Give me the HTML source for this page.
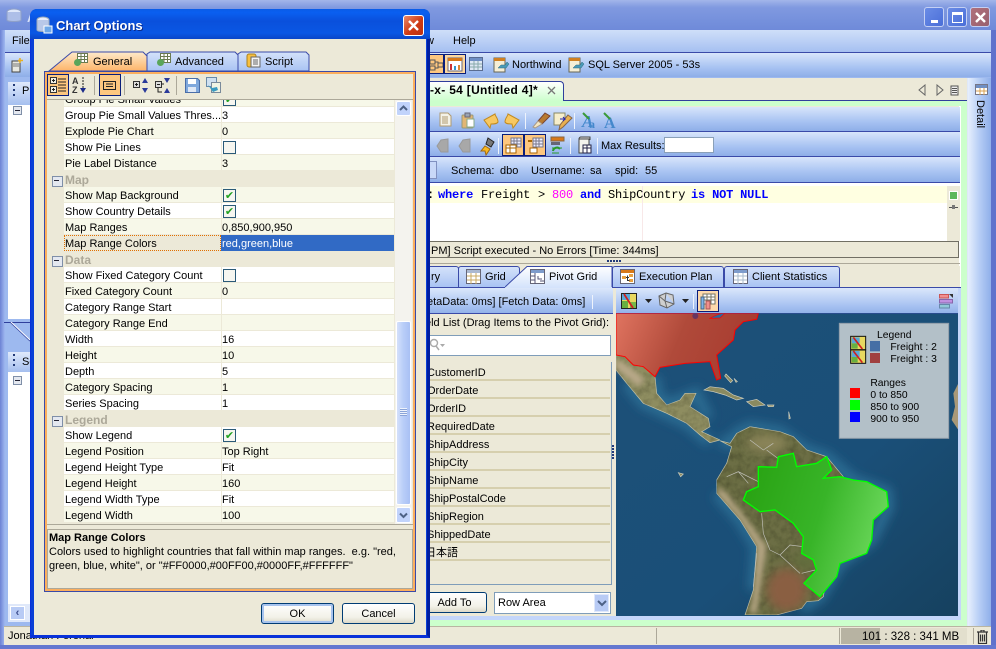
<!DOCTYPE html>
<html><head><meta charset="utf-8"><style>
html,body{margin:0;padding:0;width:996px;height:649px;overflow:hidden;background:#ece9d8}
body{position:relative;font:11px/14px "Liberation Sans","Noto Sans CJK JP",sans-serif;color:#000}
div,span,svg{position:absolute;box-sizing:border-box}
.t{white-space:nowrap;height:14px;margin-top:1px}
.tb{background:linear-gradient(#d8e5fb,#a8c3f2 60%,#8eaee8);border-bottom:1px solid #3a4aa8}
.r{left:64px;width:330px;height:16px;background:#fff;border-bottom:1px solid #ece9d8}
.c{background:#f7f8e9}
.n{top:2px;left:1px;white-space:nowrap}
.v{left:158px;top:2px;white-space:nowrap}
.d{left:157px;top:0;width:1px;height:16px;background:#ece9d8}
.g{left:48px;width:346px;height:16px;background:#ece9d8;color:#aca899;font-weight:bold;font-size:12px}
.g b{position:absolute;left:17px;top:2px}
.g i{position:absolute;left:4px;top:5px;width:9px;height:9px;border:1px solid #7f8fa8;background:#e4e8f0}
.g i:after{content:"";position:absolute;left:1px;top:3px;width:5px;height:1px;background:#223}
.ck{left:159px;top:2px;width:13px;height:13px;border:1px solid #2a5a78;background:#f6f6f0;color:#21a121;font:bold 11px/11px "DejaVu Sans",sans-serif;text-align:center}
.f{left:416px;width:194px;height:18px;background:#ece9d8;border-bottom:2px solid #d6cfae;padding-left:11px;line-height:21px;white-space:nowrap}
.sep{width:1px;background:#8ea6d8;border-right:1px solid #eef3fc}
.on{background:#fdc77f;border:1px solid #0a1e7a}
.btn{background:linear-gradient(#fff,#f2f1e8 70%,#dcd9c8);border:1px solid #003c74;border-radius:3px;text-align:center;line-height:21px}
.tab{background:linear-gradient(#d4e2fa,#a9c3f3);border:1px solid #3a4aa8;border-bottom:0;border-radius:3px 3px 0 0}
</style></head><body>

<!-- main window frame -->
<div style="left:0;top:0;width:996px;height:649px;background:#7c95dd"></div>
<div style="left:0;top:0;width:996px;height:30px;background:linear-gradient(#a3b6ea,#8099e0 25%,#7590dc 70%,#6f8ad9)"></div>
<div style="left:4px;top:30px;width:987px;height:22px;background:linear-gradient(#cfdff9,#a6c0f1)"></div>
<div class="tb" style="left:4px;top:52px;width:987px;height:26px;border-top:1px solid #3a4aa8"></div>
<div style="left:4px;top:77px;width:987px;height:550px;background:#9db9ef"></div>
<div style="left:991px;top:30px;width:5px;height:619px;background:#5f72cc"></div>
<div style="left:0;top:30px;width:5px;height:615px;background:linear-gradient(90deg,#6c82d4,#9fb8f0)"></div>
<svg style="left:6px;top:8px" width="18" height="16"><ellipse cx="8" cy="4" rx="7" ry="3" fill="#dfe8fa" stroke="#8fa0c8"/><path d="M1 4v8c0 2 14 2 14 0V4" fill="#aebfe8" stroke="#8fa0c8"/></svg>
<div class="t" style="left:27px;top:10px;color:#d6e0f8;font-weight:bold;font-size:13px">A</div>
<div class="t" style="left:12px;top:33px">File</div>
<div class="t" style="left:426px;top:33px">w</div>
<div class="t" style="left:453px;top:33px">Help</div>
<svg style="left:11px;top:57px" width="14" height="16"><rect x="1" y="4" width="8" height="11" fill="#e8e8e0" stroke="#444"/><path d="M2 7h6M2 9h6" stroke="#777"/><path d="M9 1v5M7 3.500h5" stroke="#e8b020" stroke-width="1.500"/></svg>

<!-- top toolbar right -->
<div class="on" style="left:427px;top:54px;width:17px;height:20px"></div>
<svg style="left:430px;top:58px" width="13" height="13"><path d="M0 2h5v4H0zM0 8h5v4H0zM8 5h5v4H8zM5 4h3v6H5" fill="none" stroke="#555"/></svg>
<div class="on" style="left:444px;top:54px;width:22px;height:20px;background:#fdd8a0"></div>
<svg style="left:447px;top:57px" width="16" height="15"><rect x="1" y="1" width="14" height="13" fill="#fff" stroke="#667"/><rect x="1" y="1" width="14" height="3" fill="#d87818"/><rect x="3" y="7" width="2" height="6" fill="#c33"/><rect x="7" y="9" width="2" height="4" fill="#39c"/><rect x="11" y="8" width="2" height="5" fill="#d83"/></svg>
<svg style="left:469px;top:57px" width="15" height="15"><rect x=".5" y=".5" width="13" height="13" fill="#dfe8f5" stroke="#5a6c90"/><rect x="1" y="1" width="12" height="3" fill="#6f8fc4"/><path d="M1 7h12M1 10h12M5 4v9M9 4v9" stroke="#8aa"/></svg>
<svg style="left:493px;top:56px" width="18" height="18"><rect x="1" y="2" width="11" height="14" fill="#f6efd6" stroke="#665"/><rect x="1" y="2" width="11" height="3" fill="#d08020"/><path d="M5 12l3-3 4 0 2-3 2 2-3 4-4 0z" fill="#4a9ab8" stroke="#2a6a80" stroke-width=".5"/></svg>
<div class="t" style="left:512px;top:57px">Northwind</div>
<svg style="left:568px;top:56px" width="18" height="18"><rect x="1" y="2" width="11" height="14" fill="#f6efd6" stroke="#665"/><rect x="1" y="2" width="11" height="3" fill="#d08020"/><path d="M5 12l3-3 4 0 2-3 2 2-3 4-4 0z" fill="#4a9ab8" stroke="#2a6a80" stroke-width=".5"/></svg>
<div class="t" style="left:588px;top:57px">SQL Server 2005 - 53s</div>

<!-- window controls -->
<div style="left:924px;top:7px;width:20px;height:20px;border:1px solid #c4d0f4;border-radius:3px;background:linear-gradient(135deg,#6a8ce6,#4a6ed8)"><span style="left:6px;top:12px;width:7px;height:3px;background:#fff"></span></div>
<div style="left:947px;top:7px;width:20px;height:20px;border:1px solid #c4d0f4;border-radius:3px;background:linear-gradient(135deg,#6a8ce6,#4a6ed8)"><span style="left:4px;top:4px;width:11px;height:11px;border:1px solid #fff;border-top-width:3px"></span></div>
<div style="left:970px;top:7px;width:20px;height:20px;border:1px solid #c4d0f4;border-radius:3px;background:linear-gradient(135deg,#b0707c,#98606e)"><svg style="left:3px;top:3px" width="13" height="13"><path d="M2 2l9 9M11 2l-9 9" stroke="#fff" stroke-width="2.400"/></svg></div>

<!-- left panes -->
<div style="left:8px;top:82px;width:30px;height:23px;background:linear-gradient(#dfe9fb,#a5bfef)"></div>
<div class="t" style="left:22px;top:83px">Pr</div>
<div style="left:13px;top:84px;width:2px;height:12px;background:repeating-linear-gradient(#223a78 0 2px,transparent 2px 5px)"></div>
<div style="left:8px;top:105px;width:30px;height:214px;background:#fff"></div>
<div style="left:13px;top:106px;width:9px;height:9px;border:1px solid #7f8fa8;background:#e4e8f0"><span style="left:1px;top:3px;width:5px;height:1px;background:#223"></span></div>
<div style="left:4px;top:322px;width:30px;height:1px;background:#2f3f9c"></div>
<svg style="left:8px;top:322px" width="24" height="20"><path d="M2 0L22 19" stroke="#2f3f9c"/><path d="M3 0L22 18" stroke="#fff"/></svg>
<div style="left:8px;top:352px;width:30px;height:20px;background:linear-gradient(#dfe9fb,#a5bfef)"></div>
<div class="t" style="left:22px;top:354px">So</div>
<div style="left:13px;top:354px;width:2px;height:12px;background:repeating-linear-gradient(#223a78 0 2px,transparent 2px 5px)"></div>
<div style="left:8px;top:372px;width:30px;height:232px;background:#fff"></div>
<div style="left:13px;top:376px;width:9px;height:9px;border:1px solid #7f8fa8;background:#e4e8f0"><span style="left:1px;top:3px;width:5px;height:1px;background:#223"></span></div>
<div style="left:8px;top:604px;width:30px;height:18px;background:#dfe8fa"></div>
<div style="left:10px;top:606px;width:15px;height:14px;background:#b8cbf5;border:1px solid #fff;color:#3b4c8c;font-weight:bold;text-align:center;line-height:12px">&#8249;</div>

<!-- status bar -->
<div style="left:4px;top:626px;width:987px;height:19px;background:#ece9d8;border-top:1px solid #b9b5a2"></div>
<div style="left:0;top:645px;width:996px;height:4px;background:#6478d0"></div>
<div class="t" style="left:8px;top:628px">Jonathan Ferenal</div>
<div style="left:656px;top:628px;width:1px;height:16px;background:#aca899"></div>
<div style="left:839px;top:628px;width:1px;height:16px;background:#aca899"></div>
<div style="left:841px;top:628px;width:39px;height:16px;background:#b7b3a2"></div>
<div style="left:880px;top:628px;width:87px;height:16px;background:#e2dfcd"></div>
<div style="left:973px;top:628px;width:1px;height:16px;background:#aca899"></div>
<div class="t" style="left:862px;top:629px;font-size:11.500px">101 : 328 : 341 MB</div>
<svg style="left:977px;top:630px" width="12" height="14"><path d="M0 2h11M4 2V0h3v2M1.500 2.500v11h8v-11M3.500 4.500v7M5.500 4.500v7M7.500 4.500v7" fill="none" stroke="#333" stroke-width="1.200"/></svg>

<!-- detail strip -->
<div style="left:967px;top:78px;width:24px;height:548px;background:linear-gradient(90deg,#e6effd,#b6cdf5 50%,#8fafea);border-left:1px solid #dfe8f8"></div>
<svg style="left:975px;top:84px" width="14" height="11"><rect x=".5" y=".5" width="12" height="10" fill="#fff" stroke="#778"/><rect x="1" y="1" width="11" height="3" fill="#6f8fc4"/><path d="M1 7h11M5 4v7M9 4v7" stroke="#d8a050"/></svg>
<div style="left:987px;top:100px;white-space:nowrap;transform-origin:0 0;transform:rotate(90deg)">Detail</div>

<!-- document tab row -->
<div style="left:430px;top:78px;width:537px;height:23px;background:#ece9d8"></div>
<div style="left:430px;top:100px;width:537px;height:1px;background:#2f3f9c"></div>
<div style="left:425px;top:81px;width:139px;height:20px;background:linear-gradient(#fff,#ccffcc);border:1px solid #2f3f9c;border-bottom:0;border-radius:0 4px 0 0"></div>
<div class="t" style="left:430px;top:82px;font-weight:bold;font-size:12px;letter-spacing:.3px">-x- 54 [Untitled 4]*</div>
<svg style="left:546px;top:85px" width="12" height="12"><path d="M2 2l7 7M9 2l-7 7" stroke="#777" stroke-width="1.300"/></svg>
<svg style="left:918px;top:84px" width="10" height="13"><path d="M7 1v10L1 6z" fill="none" stroke="#666"/></svg>
<svg style="left:935px;top:84px" width="10" height="13"><path d="M2 1v10l6-5z" fill="none" stroke="#666"/></svg>
<svg style="left:949px;top:84px" width="11" height="13"><rect x="2" y="2" width="7" height="9" fill="#eee" stroke="#555"/><path d="M3 4.500h5M3 6.500h5M3 8.500h5" stroke="#555"/></svg>
<div style="left:430px;top:101px;width:537px;height:525px;background:#ccffcc"></div>

<!-- editor panel -->
<div style="left:430px;top:106px;width:531px;height:510px;background:#ece9d8;border-right:2px solid #fff"></div>
<div class="tb" style="left:430px;top:107px;width:530px;height:25px"></div>
<div class="tb" style="left:430px;top:132px;width:530px;height:25px"></div>
<div class="tb" style="left:430px;top:157px;width:530px;height:26px"></div>
<div style="left:430px;top:183px;width:530px;height:3px;background:#fff"></div>

<!-- toolbar 1 icons -->
<svg style="left:439px;top:112px" width="14" height="16"><path d="M1 1h8l3 3v10H1z" fill="#f4f2e8" stroke="#b09a70"/><path d="M3 5h6M3 7h6M3 9h6M3 11h6" stroke="#b09a70"/></svg>
<svg style="left:461px;top:112px" width="15" height="17"><rect x="1" y="3" width="11" height="13" rx="1" fill="#e2b674" stroke="#997"/><rect x="4" y="1" width="5" height="4" fill="#9aa4b4" stroke="#667"/><rect x="6" y="7" width="7" height="8" fill="#fff" stroke="#8a8"/></svg>
<svg style="left:482px;top:113px" width="18" height="16"><path d="M13 1L2 7l6 8 1-4c3 0 6 0 7-2 0-4-3-6-3-8z" fill="#f8c860" stroke="#c08a20"/></svg>
<svg style="left:503px;top:113px" width="18" height="16"><path d="M5 1l11 6-6 8-1-4c-3 0-6 0-7-2 0-4 3-6 3-8z" fill="#f8c860" stroke="#c08a20"/></svg>
<div class="sep" style="left:525px;top:113px;height:16px"></div>
<svg style="left:531px;top:112px" width="20" height="18"><path d="M14 1l5 3-8 8-4-3z" fill="#b87a30" stroke="#743"/><path d="M7 9l4 3-7 4-2-1z" fill="#f4e6c0" stroke="#a98"/></svg>
<svg style="left:553px;top:112px" width="20" height="20"><path d="M1 1h11v6l-4 6H1z" fill="#f6eecb" stroke="#886"/><path d="M15 3l4 3-9 9-4 3 1-5z" fill="#e8b050" stroke="#864"/><path d="M7 7h5l-2-2m2 2l-2 2" fill="none" stroke="#22a"/></svg>
<div class="sep" style="left:574px;top:113px;height:16px"></div>
<svg style="left:581px;top:110px" width="40" height="20"><text x="1" y="17" font-size="17" font-family="Liberation Serif" font-style="italic" fill="#4488cc" font-weight="bold">A</text><text x="8" y="18" font-size="12" font-family="Liberation Serif" fill="#4488cc" font-weight="bold">a</text><path d="M2 3l6 6" stroke="#3a9a3a" stroke-width="2"/><text x="23" y="18" font-size="16" font-family="Liberation Serif" fill="#4488cc" font-weight="bold">A</text><path d="M23 3l6 6" stroke="#3a9a3a" stroke-width="2"/></svg>

<!-- toolbar 2 icons -->
<svg style="left:434px;top:137px" width="16" height="18"><path d="M3 9l4-6 7-1v13l-7 0z" fill="#a8a8a8" stroke="#999"/></svg>
<svg style="left:456px;top:137px" width="16" height="18"><path d="M3 9l4-6 7-1v13l-7 0z" fill="#a8a8a8" stroke="#999"/></svg>
<svg style="left:479px;top:136px" width="18" height="20"><path d="M9 2l6 4-3 5-5-3z" fill="#777" stroke="#222"/><path d="M6 10l5 3-4 6-1-4-4 0z" fill="#f8b820" stroke="#a06810"/></svg>
<div class="sep" style="left:498px;top:138px;height:16px"></div>
<div class="on" style="left:502px;top:134px;width:22px;height:22px"></div>
<svg style="left:505px;top:137px" width="17" height="17"><rect x="6" y="1" width="10" height="9" fill="#eef" stroke="#778"/><path d="M6 4h10M6 7h10M9 1v9M12 1v9" stroke="#778"/><rect x="1" y="8" width="10" height="8" fill="#fff" stroke="#a60"/><path d="M1 11h10M5 8v8" stroke="#a60"/></svg>
<div class="on" style="left:524px;top:134px;width:22px;height:22px"></div>
<svg style="left:527px;top:137px" width="17" height="17"><rect x="6" y="1" width="10" height="9" fill="#eef" stroke="#778"/><path d="M6 4h10M6 7h10M9 1v9M12 1v9" stroke="#778"/><rect x="1" y="3" width="4" height="2" fill="#a60"/><rect x="3" y="11" width="7" height="5" fill="#fff" stroke="#a60"/></svg>
<svg style="left:549px;top:136px" width="18" height="20"><rect x="2" y="1" width="13" height="4" fill="#d87818" stroke="#864"/><rect x="2" y="6" width="9" height="3" fill="#667"/><path d="M4 15a4 4 0 0 1 7-2" fill="none" stroke="#2a9a2a" stroke-width="2"/><path d="M3 12h10M3 17h7" stroke="#2a9a2a"/></svg>
<div class="sep" style="left:570px;top:138px;height:16px"></div>
<svg style="left:576px;top:136px" width="17" height="19"><path d="M3 3a2 2 0 0 1 2-2h9v3" fill="#ddd" stroke="#444"/><rect x="3" y="3" width="10" height="14" fill="#f4f4ee" stroke="#444"/><rect x="7" y="9" width="8" height="8" fill="#fff" stroke="#224"/><path d="M7 12h8M11 9v8" stroke="#224"/></svg>
<div class="sep" style="left:597px;top:138px;height:16px"></div>
<div class="t" style="left:601px;top:138px">Max Results:</div>
<div style="left:664px;top:137px;width:50px;height:16px;background:#fff;border:1px solid #8aa0b8"></div>

<!-- toolbar 3 -->
<div style="left:430px;top:161px;width:7px;height:18px;background:#c8d8f8;border:1px solid #8090c0;border-left:0"></div>
<div class="t" style="left:451px;top:163px">Schema:</div><div class="t" style="left:500px;top:163px">dbo</div>
<div class="t" style="left:531px;top:163px">Username:</div><div class="t" style="left:590px;top:163px">sa</div>
<div class="t" style="left:615px;top:163px">spid:</div><div class="t" style="left:645px;top:163px">55</div>

<!-- editor -->
<div style="left:430px;top:186px;width:517px;height:55px;background:#fff"></div>
<div style="left:430px;top:186px;width:517px;height:17px;background:#ffffe1"></div>
<div style="left:642px;top:186px;width:1px;height:55px;background:#f8e8e8"></div>
<div style="left:947px;top:186px;width:13px;height:55px;background:#ece9d8"></div>
<div style="left:949px;top:191px;width:9px;height:9px;background:#5cb85c;border:1px solid #fff"></div>
<div style="left:949px;top:207px;width:9px;height:1px;background:#555"></div>
<div style="left:952px;top:205px;width:3px;height:4px;background:#777"></div>
<div style="left:430px;top:188px;width:517px;height:16px;font:12px/15px 'Liberation Mono',monospace;letter-spacing:-.18px;white-space:pre"><span style="left:-3px;top:0;font-weight:bold">:</span><span style="left:8px;top:0;color:#00f;font-weight:bold">where</span><span style="left:51px;top:0">Freight</span><span style="left:108px;top:0">&gt;</span><span style="left:122px;top:0;color:#f0f">800</span><span style="left:150px;top:0;color:#00f;font-weight:bold">and</span><span style="left:178px;top:0">ShipCountry</span><span style="left:261px;top:0;color:#00f;font-weight:bold">is NOT NULL</span></div>

<!-- exec status -->
<div style="left:430px;top:241px;width:529px;height:17px;border:1px solid #716f64;border-left:0"></div>
<div class="t" style="left:431px;top:243px">PM] Script executed - No Errors [Time: 344ms]</div>
<div style="left:430px;top:263px;width:530px;height:1px;background:#aca899"></div>
<div style="left:607px;top:260px;width:14px;height:2px;background:repeating-linear-gradient(90deg,#223a78 0 2px,transparent 2px 3px)"></div>

<!-- result tabs -->
<div style="left:430px;top:266px;width:530px;height:21px;background:#ece9d8"></div>
<div class="tab" style="left:425px;top:266px;width:34px;height:21px"></div>
<div class="t" style="left:431px;top:269px">ry</div>
<div class="tab" style="left:458px;top:266px;width:62px;height:21px"></div>
<svg style="left:466px;top:269px" width="15" height="15"><rect x=".5" y=".5" width="14" height="14" fill="#fff" stroke="#667"/><rect x="1" y="1" width="13" height="3" fill="#aab8d0"/><path d="M1 7h13M1 11h13M5 4v11M10 4v11" stroke="#c8a860"/></svg>
<div class="t" style="left:485px;top:269px">Grid</div>
<div style="left:505px;top:266px;width:107px;height:24px;background:linear-gradient(#fff,#cfe0fb);clip-path:polygon(0 21px,22px 0,100% 0,100% 100%,0 100%)"></div>
<svg style="left:505px;top:266px" width="108" height="24"><path d="M0 21L22 .5H107V21" fill="none" stroke="#3a4aa8"/></svg>
<svg style="left:530px;top:269px" width="15" height="15"><rect x=".5" y=".5" width="14" height="14" fill="#fff" stroke="#667"/><rect x="1" y="1" width="13" height="3" fill="#7e9ccc"/><path d="M5 4v11M1 7h4M1 11h4M8 7v3h4M10 12h4" stroke="#557" fill="none"/></svg>
<div class="t" style="left:549px;top:269px">Pivot Grid</div>
<div class="tab" style="left:612px;top:266px;width:112px;height:21px"></div>
<svg style="left:620px;top:269px" width="15" height="15"><rect x=".5" y=".5" width="14" height="14" fill="#fff" stroke="#667"/><rect x="1" y="1" width="13" height="3" fill="#d87818"/><rect x="2" y="7" width="4" height="3" fill="#e8a040"/><rect x="9" y="5" width="4" height="3" fill="#e8a040"/><rect x="9" y="10" width="4" height="3" fill="#e8a040"/><path d="M6 8.500h3M7.500 6.500v5h2" stroke="#333" fill="none"/></svg>
<div class="t" style="left:639px;top:269px">Execution Plan</div>
<div class="tab" style="left:724px;top:266px;width:116px;height:21px"></div>
<svg style="left:733px;top:269px" width="15" height="15"><rect x=".5" y=".5" width="14" height="14" fill="#fff" stroke="#667"/><rect x="1" y="1" width="13" height="3" fill="#7e9ccc"/><path d="M1 7h13M1 11h13M5 4v11M10 4v11" stroke="#abc"/></svg>
<div class="t" style="left:752px;top:269px">Client Statistics</div>
<div style="left:430px;top:287px;width:75px;height:1px;background:#3a4aa8"></div>
<div style="left:612px;top:287px;width:349px;height:1px;background:#3a4aa8"></div>

<!-- pivot toolbar -->
<div style="left:430px;top:288px;width:528px;height:26px;background:linear-gradient(#dbe7fb,#a6c1f1 70%,#90b0e8)"></div>
<div style="left:430px;top:313px;width:528px;height:1px;background:#3a4aa8"></div>
<div style="left:958px;top:288px;width:3px;height:331px;background:#c4d6fa"></div>
<div class="t" style="left:427px;top:294px">etaData: 0ms] [Fetch Data: 0ms]</div>
<div class="sep" style="left:592px;top:295px;height:14px"></div>
<div style="left:613px;top:288px;width:3px;height:26px;background:#ece9d8"></div>
<svg style="left:621px;top:293px" width="16" height="16"><rect x=".5" y=".5" width="15" height="15" fill="#e8d860" stroke="#222"/><path d="M1 1h8v6H1z" fill="#58a8d8"/><path d="M9 9h6v6H9z" fill="#78b848"/><path d="M1 8h6v7H1z" fill="#68b040"/><path d="M3 1l9 14" stroke="#d02020" stroke-width="1.800"/></svg>
<svg style="left:644px;top:297px" width="9" height="8"><path d="M1 2h7L4.500 6z" fill="#222"/></svg>
<svg style="left:658px;top:292px" width="17" height="17"><path d="M8 1l7 2 1 9-7 4-7-3-1-9z M8 1l-1 8 9 3 M7 9l-6-5 M7 9l2 7" fill="#cfcfcf" stroke="#666"/></svg>
<svg style="left:681px;top:297px" width="9" height="8"><path d="M1 2h7L4.500 6z" fill="#222"/></svg>
<div class="sep" style="left:693px;top:294px;height:15px"></div>
<div style="left:697px;top:290px;width:22px;height:22px;background:#fdd9ac;border:1px solid #0a1e7a"></div>
<svg style="left:700px;top:293px" width="16" height="17"><rect x="3" y="1" width="12" height="10" fill="#fff" stroke="#776"/><path d="M3 4h12M3 7h12M7 1v10M11 1v10" stroke="#776"/><rect x="1" y="4" width="3" height="12" fill="#7eb4e8" stroke="#468"/><rect x="6" y="8" width="4" height="8" fill="#f0908c" stroke="#a55"/></svg>
<svg style="left:939px;top:293px" width="15" height="16"><rect x=".5" y="1.500" width="9" height="3.500" fill="#f09090" stroke="#c55"/><rect x=".5" y="6.500" width="13" height="3.500" fill="#c090e0" stroke="#86a"/><rect x=".5" y="11.500" width="10" height="3.500" fill="#90c8d8" stroke="#68a"/><path d="M10 1h4v4z" fill="#333"/></svg>

<!-- field list -->
<div class="t" style="left:425px;top:315px">eld List (Drag Items to the Pivot Grid):</div>
<div style="left:420px;top:335px;width:191px;height:21px;background:#fff;border:1px solid #7f9db9"></div>
<svg style="left:430px;top:338px" width="16" height="14"><circle cx="4" cy="5" r="3.500" fill="none" stroke="#aaa" stroke-width="1.400"/><path d="M6 8l3 4" stroke="#aaa" stroke-width="1.500"/><path d="M10 6h5l-2.500 3z" fill="#aaa"/></svg>
<div style="left:420px;top:362px;width:192px;height:223px;border:1px solid #7f9db9;border-top:0;border-left:0"></div>
<div class="f" style="top:363px">CustomerID</div>
<div class="f" style="top:381px">OrderDate</div>
<div class="f" style="top:399px">OrderID</div>
<div class="f" style="top:417px">RequiredDate</div>
<div class="f" style="top:435px">ShipAddress</div>
<div class="f" style="top:453px">ShipCity</div>
<div class="f" style="top:471px">ShipName</div>
<div class="f" style="top:489px">ShipPostalCode</div>
<div class="f" style="top:507px">ShipRegion</div>
<div class="f" style="top:525px">ShippedDate</div>
<div class="f" style="top:543px;padding-left:9px">日本語</div>
<div class="btn" style="left:420px;top:592px;width:67px;height:21px;padding-left:2px;line-height:20px">Add To</div>
<div style="left:494px;top:592px;width:117px;height:22px;background:#fff;border:1px solid #7f9db9;line-height:20px;padding-left:3px">Row Area<span style="left:99px;top:1px;width:15px;height:18px;background:#b8cbf5;border:1px solid #dfe8fa"><svg style="left:2px;top:5px" width="10" height="7"><path d="M1 1l4 4 4-4" fill="none" stroke="#4d6185" stroke-width="2"/></svg></span></div>
<div style="left:612px;top:445px;width:2px;height:14px;background:repeating-linear-gradient(#223a78 0 2px,transparent 2px 3px)"></div>

<!-- map -->
<div style="left:430px;top:616px;width:531px;height:4px;background:#c4d6fa"></div>
<svg style="left:610px;top:280px" width="386" height="369" viewBox="0 0 1158 1107">
<defs>
<clipPath id="mc"><rect x="18" y="100" width="1026" height="908"/></clipPath>
<linearGradient id="oc" x1="0" y1="0" x2="1" y2="1"><stop offset="0" stop-color="#1d5078"/><stop offset=".6" stop-color="#1a4f78"/><stop offset="1" stop-color="#16415f"/></linearGradient>
<linearGradient id="us" x1="0" y1="0" x2="1" y2=".2"><stop offset="0" stop-color="#e07460"/><stop offset=".5" stop-color="#b04a3a"/><stop offset="1" stop-color="#a83c30"/></linearGradient>
<linearGradient id="br" x1="0" y1="0" x2="1" y2=".3"><stop offset="0" stop-color="#27a010"/><stop offset=".6" stop-color="#38b428"/><stop offset="1" stop-color="#66d456"/></linearGradient>
<filter id="bl" x="-20%" y="-20%" width="140%" height="140%"><feGaussianBlur stdDeviation="14"/></filter>
<filter id="bs" x="-20%" y="-20%" width="140%" height="140%"><feGaussianBlur stdDeviation="8"/></filter>
<filter id="tx" x="0" y="0" width="100%" height="100%"><feTurbulence type="fractalNoise" baseFrequency=".05" numOctaves="3" seed="4" result="n"/><feColorMatrix in="n" type="matrix" values="0 0 0 0 0  0 0 0 0 0  0 0 0 0 0  .7 0 0 0 -.25" result="d"/><feComposite in="d" in2="SourceAlpha" operator="in" result="m"/><feMerge><feMergeNode in="SourceGraphic"/><feMergeNode in="m"/></feMerge></filter>
<clipPath id="sac"><path d="M330 482L360 490 380 460 420 440 510 455 550 470 590 510 650 530 700 590 640 950 625 962 590 965 575 985 500 1005 405 1005 430 930 440 800 390 720 320 640 320 600 350 550 365 500Z"/></clipPath>
</defs>
<g clip-path="url(#mc)">
<rect x="18" y="100" width="1026" height="908" fill="url(#oc)"/>
<g filter="url(#bl)" fill="none" stroke="#2a6c92" stroke-width="34"><path d="M330 482L360 490 380 460 420 440 510 455 590 510 650 530 730 600 830 635 835 680 785 780 690 850 630 950 575 985"/><path d="M320 640L390 720 440 800 430 930"/><path d="M135 290L140 340 170 375 258 340 295 415"/><path d="M50 310L100 370 230 430 300 488"/></g>
<path d="M18 225L45 230 70 255 100 260 135 290 140 340 170 375 210 360 225 340 258 340 240 380 295 415 300 440 275 455 330 480 300 488 270 465 230 430 170 400 100 370 50 310 18 270Z" fill="#8e8d60" stroke="#c8c8b0" stroke-width="2" filter="url(#tx)"/>
<path d="M18 235L60 260 105 300 85 320 18 265Z" fill="#b8a888" filter="url(#bs)"/>
<path d="M330 482L360 490 380 460 420 440 510 455 550 470 590 510 650 530 700 590 640 950 625 962 590 965 575 985 500 1005 405 1005 430 930 440 800 390 720 320 640 320 600 350 550 365 500Z" fill="#6c6e44" stroke="#c8c8b0" stroke-width="2" filter="url(#tx)"/>
<g clip-path="url(#sac)">
<ellipse cx="470" cy="490" rx="60" ry="28" fill="#8a8458" filter="url(#bl)"/>
<path d="M325 620L350 640 420 730 470 800 455 900 440 1000 420 1000 432 920 440 800 390 720 320 640Z" fill="#b4a482" filter="url(#bs)"/>
<ellipse cx="530" cy="930" rx="60" ry="65" fill="#8a5f42" filter="url(#bl)"/>
<ellipse cx="590" cy="840" rx="35" ry="28" fill="#646e3c" filter="url(#bl)"/>
</g>
<path d="M350 590l35-15 60 30M385 575l30 35M510 825l30-30 40 5M510 825l60 55M575 880l40-10M455 700l5 60 20 50M480 810l30 15M420 480l40 30 30-20M470 510l40 30M430 920l10-100" fill="none" stroke="#c0c0b8" stroke-width="2"/>
<path d="M282 330L300 320 340 325 370 345 400 355 380 360 345 345 310 335ZM410 365L440 358 465 375 430 380ZM472 375H492L490 380H475ZM348 282l20 20-6 6-18-20zM205 578l15 4-8 8zM536 395l5 20-4 2zM372 295l10 10-4 2z" fill="#8a8a60" stroke="#d0d0c0" stroke-width="2"/>
<path d="M1044 312L1030 340 1035 380 1025 420 1044 448Z" fill="#a89878"/>
<path d="M18 100H445L440 118 400 125 375 150 370 180 320 225 332 295 320 300 300 245 225 250 150 262 135 290 100 260 70 255 45 230 18 225Z" fill="url(#us)" stroke="#ff0000" stroke-width="3"/>
<path d="M300 115q25-15 45-15l-15 14z" fill="#2a6a9a" stroke="#f00" stroke-width="2"/>
<circle cx="256" cy="108" r="9" fill="#6a3560"/>
<path d="M445 560L500 562 505 530 550 520 560 560 620 550 650 530 665 570 640 595 690 590 730 600 770 605 830 635 835 680 790 720 785 780 770 820 690 850 680 890 630 950 582 910 620 870 610 840 575 820 580 770 550 730 495 690 450 695 400 660 410 635 445 620Z" fill="url(#br)" stroke="#00ff00" stroke-width="4"/>
<rect x="688" y="130" width="328" height="345" fill="#b3c0c8" stroke="#8f9ca8" stroke-width="3"/>
<g><rect x="722" y="169" width="45" height="40" fill="#e8d860" stroke="#111" stroke-width="3"/><path d="M725 172h24v18h-24z" fill="#58a8d8"/><path d="M725 190h18v16h-18z" fill="#68b040"/><path d="M730 172l27 35" stroke="#d02020" stroke-width="5"/></g>
<g transform="translate(0,41)"><rect x="722" y="169" width="45" height="40" fill="#e8d860" stroke="#111" stroke-width="3"/><path d="M725 172h24v18h-24z" fill="#58a8d8"/><path d="M725 190h18v16h-18z" fill="#68b040"/><path d="M730 172l27 35" stroke="#d02020" stroke-width="5"/></g>
<rect x="780" y="183" width="30" height="31" fill="#466fa5"/><rect x="780" y="219" width="30" height="30" fill="#a04040"/>
<rect x="720" y="324" width="30" height="30" fill="#ff0000"/><rect x="720" y="360" width="30" height="30" fill="#00ff00"/><rect x="720" y="396" width="30" height="30" fill="#0000ff"/>
<g font-family="Liberation Sans" font-size="31" fill="#000">
<text x="801" y="174">Legend</text>
<text x="841" y="210">Freight : 2</text><text x="841" y="246">Freight : 3</text>
<text x="781" y="318">Ranges</text><text x="781" y="354">0 to 850</text><text x="781" y="390">850 to 900</text><text x="781" y="426">900 to 950</text>
</g>
</g>
</svg>

<!-- DIALOG -->
<div style="left:30px;top:9px;width:400px;height:629px;background:#0a3fd6;border-radius:7px 7px 0 0;border:1px solid #0831d9;border-bottom:3px solid #0831d9;border-right:3px solid #001ea0"></div>
<div style="left:30px;top:9px;width:400px;height:30px;background:linear-gradient(#0a5ce8,#0a5ff0 12%,#0a50dc 40%,#0a57e4 80%,#0a46c8);border-radius:7px 7px 0 0"></div>
<div style="left:34px;top:39px;width:392px;height:596px;background:#ece9d8"></div>
<svg style="left:36px;top:16px" width="17" height="19"><ellipse cx="7" cy="4" rx="6" ry="3" fill="#e8eefc" stroke="#9ab"/><path d="M1 4v10c0 2 12 2 12 0V4" fill="#b8c8e8" stroke="#9ab"/><rect x="8" y="10" width="8" height="7" fill="#6ea8e8" stroke="#fff"/></svg>
<div class="t" style="left:56px;top:19px;color:#fff;font-weight:bold;font-size:13px;height:16px;text-shadow:1px 1px 0 #0a2a8a;margin-top:0">Chart Options</div>
<div style="left:403px;top:15px;width:21px;height:21px;background:linear-gradient(135deg,#ec8a6a,#cf3a14 55%,#bd3010);border:1px solid #fff;border-radius:3px"><svg style="left:3px;top:3px" width="13" height="13"><path d="M2 2l9 9M11 2l-9 9" stroke="#fff" stroke-width="2.400"/></svg></div>

<!-- dialog tabs -->
<svg style="left:48px;top:50px" width="265" height="23">
<defs><linearGradient id="tg" x1="0" y1="0" x2="0" y2="1"><stop offset="0" stop-color="#fdeacb"/><stop offset="1" stop-color="#fdb469"/></linearGradient><linearGradient id="tb2" x1="0" y1="0" x2="0" y2="1"><stop offset="0" stop-color="#d4e2fa"/><stop offset="1" stop-color="#a9c3f3"/></linearGradient></defs>
<path d="M99 21V4l3-2H187l3 3V21z" fill="url(#tb2)" stroke="#3a4aa8"/>
<path d="M190 21V4l3-2H258l3 3V21z" fill="url(#tb2)" stroke="#3a4aa8"/>
<path d="M1 21L24 2H95l4 4V21z" fill="url(#tg)" stroke="#3a4aa8"/>
</svg>
<svg style="left:73px;top:53px" width="16" height="14"><rect x="4.500" y=".5" width="10" height="9" fill="#fff" stroke="#6a7a50"/><path d="M4.500 3.500h10M4.500 6.500h10M8 .5v9M11.500 .5v9" stroke="#6a7a50"/><circle cx="4.500" cy="9.500" r="3.500" fill="#5aa55a"/></svg>
<div class="t" style="left:93px;top:54px">General</div>
<svg style="left:156px;top:53px" width="16" height="14"><rect x="4.500" y=".5" width="10" height="9" fill="#fff" stroke="#6a7a50"/><path d="M4.500 3.500h10M4.500 6.500h10M8 .5v9M11.500 .5v9" stroke="#6a7a50"/><circle cx="4.500" cy="9.500" r="3.500" fill="#5aa55a"/></svg>
<div class="t" style="left:175px;top:54px">Advanced</div>
<svg style="left:246px;top:53px" width="16" height="16"><rect x="1" y="1" width="9" height="13" rx="2" fill="#f8c040" stroke="#a88020"/><rect x="5" y="4" width="9" height="10" fill="#f4f4f4" stroke="#666"/><path d="M7 7h5M7 9h5M7 11h5" stroke="#666"/></svg>
<div class="t" style="left:265px;top:54px">Script</div>

<!-- panel -->
<div style="left:44px;top:71px;width:372px;height:521px;background:#fbae5e;border:1px solid #3a4aa8"></div>
<div style="left:47px;top:74px;width:366px;height:515px;background:#ece9d8"></div>
<div style="left:47px;top:99px;width:366px;height:1px;background:#aca899"></div>

<!-- dialog toolbar -->
<div class="on" style="left:47px;top:74px;width:22px;height:22px"></div>
<svg style="left:50px;top:77px" width="17" height="17"><rect x=".5" y=".5" width="6" height="6" fill="#f0f0e8" stroke="#333"/><rect x=".5" y="9.500" width="6" height="6" fill="#f0f0e8" stroke="#333"/><path d="M2 3.500h3M3.500 2v3M2 12.500h3M3.500 11v3M8 2h8M8 5h8M8 8h8M8 11h8M8 14h8" stroke="#222" stroke-width="1"/></svg>
<svg style="left:72px;top:76px" width="17" height="19"><text x="0" y="8" font-size="9" font-family="Liberation Sans" fill="#333" font-weight="bold">A</text><text x="0" y="17" font-size="9" font-family="Liberation Sans" fill="#333" font-weight="bold">Z</text><path d="M11 1v13" stroke="#222" stroke-dasharray="2 1"/><path d="M8 12h6l-3 5z" fill="#1a2a8a"/></svg>
<div class="sep" style="left:94px;top:76px;height:19px;background:#aca899;border:0"></div>
<div class="on" style="left:99px;top:74px;width:22px;height:22px"></div>
<svg style="left:103px;top:81px" width="14" height="9"><rect x=".5" y=".5" width="12" height="8" fill="none" stroke="#222"/><path d="M3 3h7M3 5.500h7" stroke="#222"/></svg>
<div class="sep" style="left:124px;top:76px;height:19px;background:#aca899;border:0"></div>
<svg style="left:133px;top:77px" width="16" height="17"><rect x=".5" y="4.500" width="6" height="6" fill="#ddd" stroke="#333"/><path d="M2 7.500h3M3.500 6v3" stroke="#222"/><path d="M12 1l3 5H9zM12 16l3-5H9z" fill="#2a3a9a"/></svg>
<svg style="left:155px;top:77px" width="16" height="17"><rect x=".5" y="4.500" width="6" height="6" fill="#ddd" stroke="#333"/><path d="M2 7.500h3" stroke="#222"/><path d="M6 7h3M3 11v4h4" stroke="#222" fill="none"/><path d="M12 6l3-5H9zM12 11l3 5H9z" fill="#2a3a9a"/></svg>
<div class="sep" style="left:176px;top:76px;height:19px;background:#aca899;border:0"></div>
<svg style="left:185px;top:78px" width="15" height="15"><path d="M.5.500h12l2 2v12H.5z" fill="#7fa8dc" stroke="#4a6ea8"/><rect x="3" y="1" width="8" height="5" fill="#fff"/><rect x="3" y="9" width="8" height="5" fill="#dfe8f5"/></svg>
<svg style="left:206px;top:77px" width="16" height="17"><rect x=".5" y=".5" width="10" height="9" fill="#cfe0f0" stroke="#6a8aa8"/><rect x="5.500" y="5.500" width="9" height="10" fill="#f0f4e4" stroke="#7a8a9a"/><path d="M2 8l4 3 5-1 1 3-5 2z" fill="#3a9ac0"/></svg>

<!-- grid rows -->
<div style="left:47px;top:100px;width:348px;height:424px;overflow:hidden;background:#ece9d8">
<div style="left:-47px;top:-100px;width:450px;height:640px">
<div class="r c" style="top:91px"><span class="n">Group Pie Small Values</span><span class="d"></span><span class="ck">✔</span></div>
<div class="r" style="top:107px"><span class="n">Group Pie Small Values Thres...</span><span class="d"></span><span class="v">3</span></div>
<div class="r c" style="top:123px"><span class="n">Explode Pie Chart</span><span class="d"></span><span class="v">0</span></div>
<div class="r" style="top:139px"><span class="n">Show Pie Lines</span><span class="d"></span><span class="ck"></span></div>
<div class="r c" style="top:155px"><span class="n">Pie Label Distance</span><span class="d"></span><span class="v">3</span></div>
<div class="g" style="top:171px"><i></i><b>Map</b></div>
<div class="r c" style="top:187px"><span class="n">Show Map Background</span><span class="d"></span><span class="ck">✔</span></div>
<div class="r" style="top:203px"><span class="n">Show Country Details</span><span class="d"></span><span class="ck">✔</span></div>
<div class="r c" style="top:219px"><span class="n">Map Ranges</span><span class="d"></span><span class="v">0,850,900,950</span></div>
<div class="r" style="top:235px;background:#316ac5;border:0"><span style="left:0;top:0;width:157px;height:16px;background:#ece9d8;border:1px dotted #e07000"></span><span class="n">Map Range Colors</span><span class="v" style="color:#fff">red,green,blue</span></div>
<div class="g" style="top:251px"><i></i><b>Data</b></div>
<div class="r" style="top:267px"><span class="n">Show Fixed Category Count</span><span class="d"></span><span class="ck"></span></div>
<div class="r c" style="top:283px"><span class="n">Fixed Category Count</span><span class="d"></span><span class="v">0</span></div>
<div class="r" style="top:299px"><span class="n">Category Range Start</span><span class="d"></span></div>
<div class="r c" style="top:315px"><span class="n">Category Range End</span><span class="d"></span></div>
<div class="r" style="top:331px"><span class="n">Width</span><span class="d"></span><span class="v">16</span></div>
<div class="r c" style="top:347px"><span class="n">Height</span><span class="d"></span><span class="v">10</span></div>
<div class="r" style="top:363px"><span class="n">Depth</span><span class="d"></span><span class="v">5</span></div>
<div class="r c" style="top:379px"><span class="n">Category Spacing</span><span class="d"></span><span class="v">1</span></div>
<div class="r" style="top:395px"><span class="n">Series Spacing</span><span class="d"></span><span class="v">1</span></div>
<div class="g" style="top:411px"><i></i><b>Legend</b></div>
<div class="r" style="top:427px"><span class="n">Show Legend</span><span class="d"></span><span class="ck">✔</span></div>
<div class="r c" style="top:443px"><span class="n">Legend Position</span><span class="d"></span><span class="v">Top Right</span></div>
<div class="r" style="top:459px"><span class="n">Legend Height Type</span><span class="d"></span><span class="v">Fit</span></div>
<div class="r c" style="top:475px"><span class="n">Legend Height</span><span class="d"></span><span class="v">160</span></div>
<div class="r" style="top:491px"><span class="n">Legend Width Type</span><span class="d"></span><span class="v">Fit</span></div>
<div class="r c" style="top:507px"><span class="n">Legend Width</span><span class="d"></span><span class="v">100</span></div>
</div></div>

<!-- grid scrollbar -->
<div style="left:395px;top:100px;width:17px;height:424px;background:#f4f3ee"></div>
<div style="left:396px;top:101px;width:15px;height:15px;background:#c1d3fb;border:1px solid #fff;border-radius:2px"><svg style="left:2px;top:3px" width="9" height="7"><path d="M1 5l3.500-3.500L8 5" fill="none" stroke="#4d6185" stroke-width="2"/></svg></div>
<div style="left:396px;top:321px;width:15px;height:184px;background:linear-gradient(90deg,#d4e0fb,#b8cdf8 50%,#a9c0f4);border:1px solid #fff;border-radius:2px"></div>
<div style="left:400px;top:408px;width:7px;height:8px;background:repeating-linear-gradient(#eef3fc 0 1px,#8aa4d8 1px 2px)"></div>
<div style="left:396px;top:507px;width:15px;height:16px;background:#c1d3fb;border:1px solid #fff;border-radius:2px"><svg style="left:2px;top:4px" width="9" height="7"><path d="M1 1.500L4.500 5 8 1.500" fill="none" stroke="#4d6185" stroke-width="2"/></svg></div>

<!-- description -->
<div style="left:47px;top:524px;width:366px;height:4px;background:#ece9d8;border-top:1px solid #aca899"></div>
<div style="left:47px;top:529px;width:366px;height:60px;background:#ece9d8;border:1px solid #aca899"></div>
<div class="t" style="left:49px;top:530px;font-weight:bold">Map Range Colors</div>
<div class="t" style="left:49px;top:544px">Colors used to highlight countries that fall within map ranges.&nbsp; e.g. "red,</div>
<div class="t" style="left:49px;top:558px">green, blue, white", or "#FF0000,#00FF00,#0000FF,#FFFFFF"</div>

<!-- dialog buttons -->
<div class="btn" style="left:261px;top:603px;width:73px;height:21px;box-shadow:inset 0 0 0 2px #a8c4ee">OK</div>
<div class="btn" style="left:342px;top:603px;width:73px;height:21px">Cancel</div>

</body></html>
